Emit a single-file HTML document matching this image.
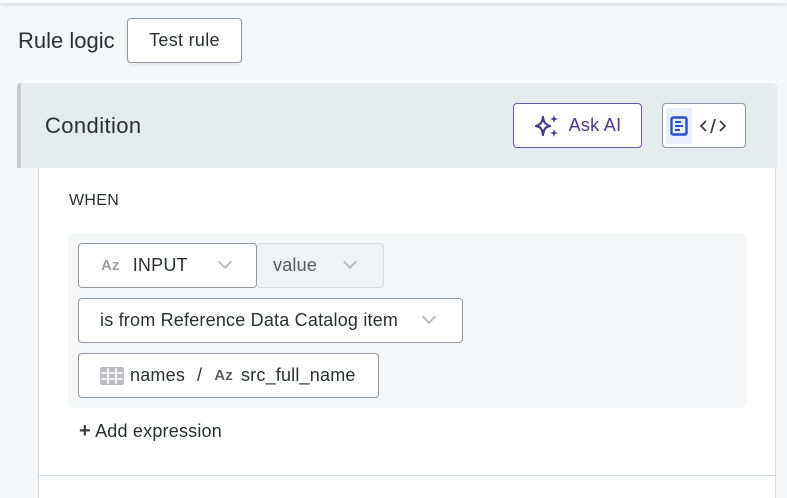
<!DOCTYPE html>
<html><head><style>
*{box-sizing:border-box;margin:0;padding:0}
body{width:787px;height:487px;background:#f5f7f9;font-family:"Liberation Sans",sans-serif;color:#2b2f33;position:relative;overflow:hidden}
.a{position:absolute}
.topcard{left:0;top:-20px;width:787px;height:23px;background:#f5f7f9;box-shadow:0 2px 4px rgba(0,0,0,.12)}
.btn{position:absolute;background:#fff;border:1px solid #8e9aa3;border-radius:4px;display:flex;align-items:center;justify-content:center}
.box{position:absolute;background:#fff;border:1px solid #8e9aa3;border-radius:4px;display:flex;align-items:center;font-size:18px;letter-spacing:0.2px}
.chev{width:10px;height:10px;border-right:2px solid #b8bec4;border-bottom:2px solid #b8bec4;transform:rotate(45deg);margin-top:-6px;position:absolute}
.az{color:#9aa0a6;font-weight:bold;font-size:15px}
</style></head><body>
<div class="a topcard"></div>
<div class="a" style="left:18px;top:28px;font-size:22px">Rule logic</div>
<div class="btn" style="left:127px;top:18px;width:115px;height:45px;font-size:18px;letter-spacing:0.3px;box-shadow:0 1px 3px rgba(0,0,0,.1)">Test rule</div>
<div class="a" style="left:17px;top:83px;width:760px;height:85px;background:#e6ebee;border-left:4px solid #c5cdd3;border-radius:4px 4px 0 0"></div>
<div class="a" style="left:45px;top:113px;font-size:22px;letter-spacing:0.4px">Condition</div>
<div class="btn" style="left:513px;top:103px;width:129px;height:45px;border-color:#6a54a8;color:#4b3a8a;font-size:18px;letter-spacing:0.3px">
<svg width="26" height="26" viewBox="0 0 26 26" style="margin-right:9px"><path d="M9 4 C10 10 11 11 16 13 C11 14 10 16 9 22 C8 16 7 14 2 13 C7 11 8 10 9 4Z" fill="none" stroke="#4b3a8a" stroke-width="2.2" stroke-linejoin="round"/><path d="M20 2 L21 5 L24 6 L21 7 L20 10 L19 7 L16 6 L19 5Z" fill="#4b3a8a"/><path d="M20 16 L21 19 L24 20 L21 21 L20 24 L19 21 L16 20 L19 19Z" fill="#4b3a8a"/></svg>Ask AI</div>
<div class="btn" style="left:662px;top:103px;width:84px;height:45px;justify-content:flex-start;padding:3px">
<div style="width:26px;height:36px;background:#e9eef8;border-radius:2px;display:flex;align-items:center;justify-content:center"><svg width="18" height="20" viewBox="0 0 18 20"><rect x="1.5" y="1.5" width="15" height="17" rx="1.5" fill="none" stroke="#2452c4" stroke-width="2.4"/><path d="M5 6h6M5 10h8M5 14h5" stroke="#2452c4" stroke-width="2"/></svg></div>
<svg width="28" height="20" viewBox="0 0 28 20" style="margin-left:7px"><path d="M7 5 L2 10 L7 15M21 5 L26 10 L21 15M16 3 L12 17" fill="none" stroke="#3a3f44" stroke-width="1.8"/></svg></div>
<div class="a" style="left:38px;top:168px;width:738px;height:330px;background:#fff;border-left:1px solid #d3d8dc;border-right:1px solid #d3d8dc"></div>
<div class="a" style="left:38px;top:475px;width:738px;height:1px;background:#d3d8dc"></div>
<div class="a" style="left:69px;top:192px;font-size:16px;letter-spacing:0.3px">WHEN</div>
<div class="a" style="left:68px;top:233px;width:678px;height:175px;background:#f4f6f8;border-radius:4px"></div>
<div class="box" style="left:256px;top:243px;width:128px;height:45px;background:#eff1f3;border-color:#d7dce0;color:#555b61;padding-left:16px">value<span class="chev" style="left:88px;top:19px"></span></div>
<div class="box" style="left:78px;top:243px;width:179px;height:45px;padding-left:22px"><span class="az">Az</span><span style="margin-left:13px">INPUT</span><span class="chev" style="left:141px;top:19px"></span></div>
<div class="box" style="left:78px;top:298px;width:385px;height:45px;padding-left:21px">is from Reference Data Catalog item<span class="chev" style="left:345px;top:19px"></span></div>
<div class="box" style="left:78px;top:353px;width:301px;height:45px;padding-left:21px">
<svg width="24" height="18" viewBox="0 0 24 18" style="margin-right:6px"><rect x="0" y="0" width="24" height="18" rx="2" fill="#b8bcc0"/><path d="M1 6h22M1 12h22M8 1v16M16 1v16" stroke="#fff" stroke-width="1.6"/></svg>names<span style="margin:0 12px">/</span><span class="az" style="color:#5a6066">Az</span><span style="margin-left:8px">src_full_name</span></div>
<div class="a" style="left:79px;top:420px;font-size:18px;letter-spacing:0.2px"><span style="font-size:20px;font-weight:bold;color:#3a3f44">+</span> Add expression</div>
</body></html>
